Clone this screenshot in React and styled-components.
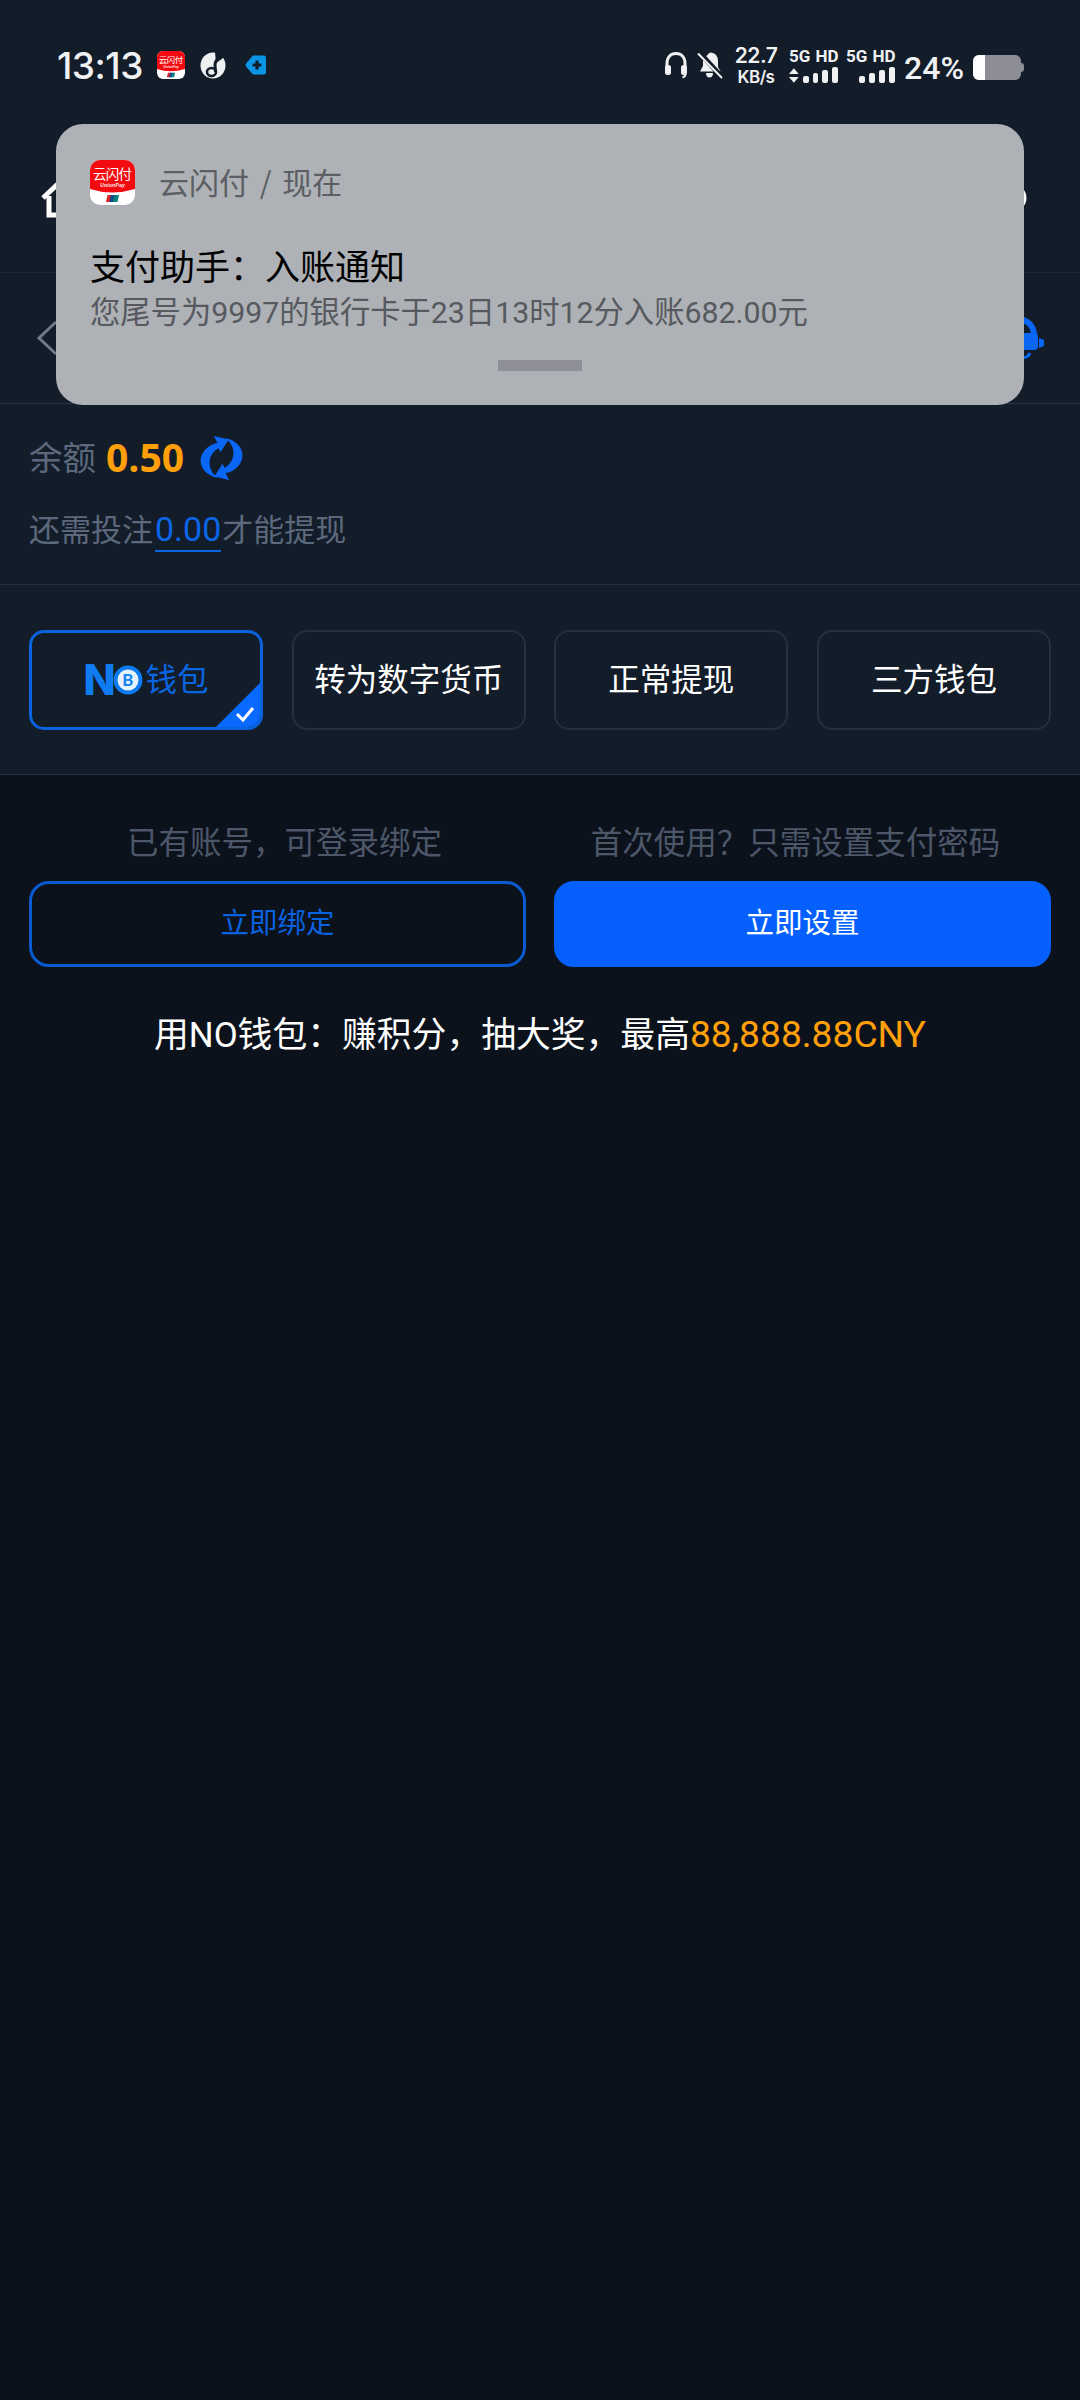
import React from 'react';
import styled, { createGlobalStyle } from 'styled-components';

const GlobalStyle = createGlobalStyle`
  html, body {
    margin: 0;
    padding: 0;
    background: #0c121c;
  }
  * { box-sizing: border-box; }
`;

const CJK = `"Noto Sans CJK SC", "Noto Sans", sans-serif`;
const MIXED = `Roboto, "Noto Sans CJK SC", sans-serif`;

const Page = styled.div`
  position: relative;
  width: 1080px;
  min-height: 2400px;
  background: #0c121c;
  font-family: ${MIXED};
  overflow: hidden;
`;

const Top = styled.div`
  background: #131c29;
`;

/* status bar */
const StatusBar = styled.div`
  height: 124px;
  padding: 6px 56px 0 57px;
  display: flex;
  align-items: center;
  justify-content: space-between;
  color: #f0f1f3;
`;

const StatusLeft = styled.div`
  display: flex;
  align-items: center;
`;

const Clock = styled.span`
  font-family: Inter, sans-serif;
  font-size: 37px;
  font-weight: 500;
  letter-spacing: -0.5px;
  width: 100px;
`;

const StatusRight = styled.div`
  display: flex;
  align-items: center;
`;

const NetSpeed = styled.div`
  display: flex;
  flex-direction: column;
  align-items: center;
  width: 44px;
  margin-left: 11px;
  font-family: Inter, sans-serif;
  font-weight: 600;
  line-height: 1;
  b { font-size: 21px; font-weight: 600; letter-spacing: -0.5px; }
  span { font-size: 17px; margin-top: 3px; letter-spacing: -0.5px; }
`;

const Sim = styled.div`
  width: 49px;
  margin-left: ${p => p.$gap}px;
  display: flex;
  flex-direction: column;
  align-items: stretch;
`;

const SimLabel = styled.span`
  font-family: Roboto, sans-serif;
  font-size: 17px;
  font-weight: 700;
  line-height: 17px;
  white-space: nowrap;
  word-spacing: 1px;
`;

const Signal = styled.div`
  height: 17px;
  margin-top: 1px;
  display: flex;
  align-items: flex-end;
  justify-content: flex-end;
  gap: 4px;
`;

const SignalBar = styled.i`
  display: block;
  width: 6px;
  height: ${p => p.$h}px;
  border-radius: 2px;
  background: #f0f1f3;
`;

const Arrows = styled.svg`
  width: 10px;
  height: 15px;
`;

const Percent = styled.span`
  font-family: Roboto, sans-serif;
  font-size: 32px;
  font-weight: 500;
  margin: 6px 0 0 9px;
  width: 60px;
  white-space: nowrap;
`;

const Battery = styled.div`
  position: relative;
  width: 48px;
  height: 25px;
  margin: 5px 3px 0 9px;
  border-radius: 6px;
  background: #8c8d96;
  &::before {
    content: '';
    position: absolute;
    left: 0;
    top: 0;
    bottom: 0;
    width: 12px;
    border-radius: 6px 0 0 6px;
    background: #fff;
  }
  &::after {
    content: '';
    position: absolute;
    right: -3px;
    top: 8px;
    width: 3px;
    height: 9px;
    border-radius: 0 3px 3px 0;
    background: #8c8d96;
  }
`;

/* app header rows, mostly covered by the notification */
const NavRow = styled.div`
  height: ${p => p.$h}px;
  padding: 0 34px 0 ${p => p.$left}px;
  display: flex;
  align-items: center;
  justify-content: space-between;
  border-bottom: 1px solid ${p => p.$line};
`;

/* balance */
const BalancePanel = styled.section`
  height: 182px;
  padding: 30px 29px 0;
  border-top: 1px solid #283242;
  border-bottom: 1px solid #242d3b;
`;

const BalanceRow = styled.div`
  display: flex;
  align-items: center;
  height: 44px;
`;

const Muted = styled.span`
  font-family: ${CJK};
  font-size: 33.5px;
  color: #5c697d;
  margin-top: -2px;
`;

const Amount = styled.span`
  margin-left: 10px;
  font-family: "Open Sans", sans-serif;
  font-size: 39px;
  font-weight: 700;
  color: #ff9f0a;
`;

const RefreshIcon = styled.svg`
  width: 43px;
  height: 44px;
  margin: 3px 0 0 16px;
`;

const NeedRow = styled.div`
  margin-top: 26px;
  height: 46px;
  display: flex;
  align-items: center;
  font-family: ${CJK};
  font-size: 31px;
  color: #5c697d;
`;

const NeedValue = styled.span`
  margin: 6px 1px 0 2px;
  font-family: Roboto, sans-serif;
  font-size: 34px;
  line-height: 42px;
  color: #0a66e6;
  border-bottom: 2px solid #0a66e6;
`;

/* method tabs */
const TabPanel = styled.section`
  height: 190px;
  padding: 45px 29px 0;
  border-bottom: 1px solid #242d3b;
  display: flex;
  justify-content: space-between;
  align-items: flex-start;
`;

const Tab = styled.button`
  position: relative;
  width: 234px;
  height: 100px;
  padding: 0 0 7px;
  overflow: hidden;
  display: flex;
  align-items: center;
  justify-content: center;
  border-radius: 15px;
  border: ${p => (p.$active ? '3px solid #0a62dc' : '2px solid #262f3e')};
  background: transparent;
  font-family: ${CJK};
  font-size: 31.5px;
  color: #fff;
  &::after {
    content: '';
    display: ${p => (p.$active ? 'block' : 'none')};
    position: absolute;
    right: 0;
    bottom: 0;
    border-style: solid;
    border-width: 0 0 44px 44px;
    border-color: transparent transparent #0a69ff transparent;
  }
`;

const TabCheck = styled.svg`
  position: absolute;
  right: 5px;
  bottom: 5px;
  width: 20px;
  height: 16px;
  z-index: 1;
`;

const LogoN = styled.span`
  font-family: Inter, sans-serif;
  font-size: 42px;
  font-weight: 800;
  line-height: 1;
  color: #0f7bf0;
  padding-top: 7px;
`;

const Coin = styled.svg`
  width: 30px;
  height: 30px;
  margin: 7px 0 0 -3px;
`;

const TabLabel = styled.span`
  margin-left: 3px;
  color: #0a66e0;
`;

/* bind / set password */
const BindGrid = styled.section`
  padding: 40px 29px 0;
  display: grid;
  grid-template-columns: repeat(2, 497px);
  column-gap: 28px;
`;

const BindColumn = styled.div`
  display: flex;
  flex-direction: column;
  align-items: stretch;
`;

const Hint = styled.div`
  height: 50px;
  font-family: ${CJK};
  font-size: 31.5px;
  line-height: 50px;
  text-align: center;
  white-space: nowrap;
  color: #4c5769;
  transform: translateX(${p => p.$shift}px);
`;

const ActionButton = styled.button`
  margin-top: 16px;
  height: 86px;
  border-radius: 20px;
  border: 3px solid #0a5ad0;
  font-family: ${CJK};
  font-size: 28.5px;
  padding: 0 0 7px;
  color: ${p => (p.$solid ? '#fff' : '#0a62e0')};
  background: ${p => (p.$solid ? '#0560fd' : 'transparent')};
  border-color: ${p => (p.$solid ? '#0560fd' : '#0a5ad0')};
`;

const Promo = styled.p`
  margin: 43px 0 0;
  text-align: center;
  white-space: nowrap;
  font-family: ${MIXED};
  font-size: 34.8px;
  line-height: 48px;
  color: #fff;
  em {
    font-style: normal;
    font-size: 37.2px;
    color: #ff9f0a;
  }
`;

/* heads-up notification */
const Notice = styled.div`
  position: absolute;
  left: 56px;
  top: 124px;
  width: 968px;
  height: 281px;
  padding: 36px 34px 0 34px;
  border-radius: 27px;
  background: #aeb1b6;
`;

const NoticeHead = styled.div`
  display: flex;
  align-items: center;
  gap: 24px;
  font-family: ${CJK};
  font-size: 30px;
  word-spacing: 4px;
  color: #5b5e63;
  span { margin-top: -4px; }
`;

const NoticeTitle = styled.div`
  margin-top: 37px;
  font-family: ${CJK};
  font-size: 35px;
  line-height: 46px;
  color: #000;
`;

const NoticeBody = styled.div`
  margin-top: 4px;
  font-family: ${MIXED};
  font-size: 30.3px;
  line-height: 42px;
  color: #56595e;
`;

const NoticeHandle = styled.div`
  position: absolute;
  left: 442px;
  top: 236px;
  width: 84px;
  height: 11px;
  background: #8e8f96;
`;

const UnionPayIcon = ({ size }) => (
  <svg width={size} height={size} viewBox="0 0 45 45">
    <defs>
      <clipPath id="upClip">
        <rect width="45" height="45" rx="10" />
      </clipPath>
    </defs>
    <g clipPath="url(#upClip)">
      <rect width="45" height="45" fill="#fff" />
      <path d="M0 0H45V29Q22 36 0 29Z" fill="#f40b0f" />
      <text x="22.5" y="19" textAnchor="middle" fontSize="13.5" fill="#fff" fontFamily='"Noto Sans CJK SC", sans-serif' textLength="39">云闪付</text>
      <text x="22.5" y="27" textAnchor="middle" fontSize="6" fontStyle="italic" fontWeight="700" fill="#ffd9d9" fontFamily="Roboto, sans-serif">UnionPay</text>
      <path d="M17.5 35H23L21.5 42H16Z" fill="#d8232a" />
      <path d="M21 35H26L24.5 42H19.5Z" fill="#0e4c8f" />
      <path d="M24.5 35H29L27.5 42H23Z" fill="#0d7f7a" />
    </g>
  </svg>
);

const MusicIcon = () => (
  <svg width="26" height="27" viewBox="0 0 26 27" style={{ marginLeft: 15 }}>
    <ellipse cx="13" cy="13.5" rx="12.5" ry="13" fill="#eef0f2" />
    <path d="M23 4C18 6 15 9 15 13L15.5 20" fill="none" stroke="#131c29" strokeWidth="3" />
    <path d="M16 11C19 9 22 7 24 5L21 0H15Z" fill="#131c29" />
    <ellipse cx="11.5" cy="20" rx="4.5" ry="4" fill="none" stroke="#131c29" strokeWidth="2.6" />
  </svg>
);

const TagIcon = () => (
  <svg width="22" height="22" viewBox="0 0 22 22" style={{ marginLeft: 19 }}>
    <path d="M8 1.5H19Q21 1.5 21 3.5V18.5Q21 20.5 19 20.5H8L1 12.5Q0 11 1 9.5Z" fill="#0a96e6" />
    <path d="M12 6.5V15.5M7.5 11H16.5" stroke="#131c29" strokeWidth="3.2" />
  </svg>
);

const StatusHeadset = () => (
  <svg viewBox="0 0 24 28" fill="none" width="24" height="28">
    <path d="M3 17V12.5C3 6.5 6.5 2.5 12 2.5S21 6.5 21 12.5V17" stroke="#f0f1f3" strokeWidth="3" />
    <rect x="1" y="14" width="6" height="10" rx="2.5" fill="#f0f1f3" />
    <rect x="17" y="14" width="6" height="10" rx="2.5" fill="#f0f1f3" />
    <path d="M21.5 23C21.5 25 20.5 26 18.5 26.5" stroke="#f0f1f3" strokeWidth="2" />
  </svg>
);

// support headset in the sub header, only its right side shows past the notification
const SupportHeadset = () => (
  <svg viewBox="0 0 46 46" width="46" height="46" fill="none">
    <path d="M2 20A16 16 0 0 1 34 20" stroke="#0a66f5" strokeWidth="6" />
    <rect x="22" y="18" width="16" height="17" rx="4" fill="#0a66f5" />
    <path d="M39 23L44 25V31L39 33Z" fill="#0a66f5" />
    <path d="M30 38C28 42 26 43 20 43" stroke="#0a66f5" strokeWidth="3" />
  </svg>
);

const MutedBell = () => (
  <svg width="26" height="28" viewBox="0 0 26 28" style={{ marginLeft: 9 }}>
    <path d="M13 1.5C18.5 1.5 21 5.5 21 10V16L23.5 20.5H3L6 15V8Z" fill="#f0f1f3" />
    <path d="M9 22H16C16 25 14.5 26.5 12.5 26.5S9 25 9 22Z" fill="#f0f1f3" />
    <path d="M2 1L25 26" stroke="#131c29" strokeWidth="5" />
    <path d="M1 2.5L25 27" stroke="#f0f1f3" strokeWidth="2" />
  </svg>
);

const arcPath = 'M17 6.5C7 9 .5 16 .5 24.5C1 33 8 39 17 41C11.5 36 8.5 30.5 9.5 24.5C10 19 13.5 14.5 18 12L20 16L28 3.5L13.5 0Z';

const RefreshGlyph = () => (
  <RefreshIcon viewBox="0 0 42 43">
    <g fill="#0a66f5">
      <path d={arcPath} />
      <path transform="rotate(180 21 21.5)" d={arcPath} />
    </g>
  </RefreshIcon>
);

const bars = [7, 10, 13, 16];

const SignalBars = ({ arrows }) => (
  <Signal>
    {arrows && (
      <Arrows viewBox="0 0 10 15">
        <path d="M5 0L10 6H0Z M5 15L0 9H10Z" fill="#f0f1f3" />
      </Arrows>
    )}
    {bars.map(h => (
      <SignalBar key={h} $h={h} />
    ))}
  </Signal>
);

const App = () => {
  return (
    <Page>
      <GlobalStyle />
      <Top>
        <StatusBar>
          <StatusLeft>
            <Clock>13:13</Clock>
            <UnionPayIcon size={28} />
            <MusicIcon />
            <TagIcon />
          </StatusLeft>
          <StatusRight>
            <StatusHeadset />
            <MutedBell />
            <NetSpeed>
              <b>22.7</b>
              <span>KB/s</span>
            </NetSpeed>
            <Sim $gap={11}>
              <SimLabel>5G HD</SimLabel>
              <SignalBars arrows />
            </Sim>
            <Sim $gap={8}>
              <SimLabel>5G HD</SimLabel>
              <SignalBars />
            </Sim>
            <Percent>24%</Percent>
            <Battery />
          </StatusRight>
        </StatusBar>

        <NavRow $h={149} $left={41} $line="#1c2533">
          <svg width="40" height="40" viewBox="0 0 40 40" fill="none">
            <path d="M2 20L20 3L38 20" stroke="#fff" strokeWidth="5" />
            <path d="M8 18V37H32V18" stroke="#fff" strokeWidth="5" />
          </svg>
          <svg width="28" height="28" viewBox="0 0 28 28" style={{ marginRight: 19 }}>
            <circle cx="14" cy="14" r="11.5" fill="none" stroke="#fff" strokeWidth="4" />
          </svg>
        </NavRow>

        <NavRow $h={130} $left={36} $line="transparent">
          <svg width="24" height="36" viewBox="0 0 24 36" fill="none">
            <path d="M20 2L3 18L20 34" stroke="#6f7a8a" strokeWidth="3" />
          </svg>
          <SupportHeadset />
        </NavRow>

        <BalancePanel>
          <BalanceRow>
            <Muted>余额</Muted>
            <Amount>0.50</Amount>
            <RefreshGlyph />
          </BalanceRow>
          <NeedRow>
            还需投注<NeedValue>0.00</NeedValue>才能提现
          </NeedRow>
        </BalancePanel>

        <TabPanel>
          <Tab $active>
            <LogoN>N</LogoN>
            <Coin viewBox="0 0 30 30">
              <circle cx="15" cy="15" r="14.5" fill="#0f7bf0" />
              <circle cx="15" cy="15" r="10.5" fill="#e6f3ff" />
              <text x="15" y="21" textAnchor="middle" fontSize="17" fontWeight="700" fill="#1a86ee" fontFamily="Roboto, sans-serif">B</text>
            </Coin>
            <TabLabel>钱包</TabLabel>
            <TabCheck viewBox="0 0 20 16" fill="none">
              <path d="M2 8L8 14L18 2" stroke="#fff" strokeWidth="3" />
            </TabCheck>
          </Tab>
          <Tab>转为数字货币</Tab>
          <Tab>正常提现</Tab>
          <Tab>三方钱包</Tab>
        </TabPanel>
      </Top>

      <BindGrid>
        <BindColumn>
          <Hint $shift={7}>{'已有账号\uFF0C可登录绑定'}</Hint>
          <ActionButton>立即绑定</ActionButton>
        </BindColumn>
        <BindColumn>
          <Hint $shift={-7}>{'首次使用\uFF1F只需设置支付密码'}</Hint>
          <ActionButton $solid>立即设置</ActionButton>
        </BindColumn>
      </BindGrid>

      <Promo>
        {'用NO钱包\uFF1A赚积分\uFF0C抽大奖\uFF0C最高'}<em>88,888.88CNY</em>
      </Promo>

      <Notice>
        <NoticeHead>
          <UnionPayIcon size={45} />
          <span>云闪付 / 现在</span>
        </NoticeHead>
        <NoticeTitle>{'支付助手\uFF1A入账通知'}</NoticeTitle>
        <NoticeBody>您尾号为9997的银行卡于23日13时12分入账682.00元</NoticeBody>
        <NoticeHandle />
      </Notice>
    </Page>
  );
};

export default App;
